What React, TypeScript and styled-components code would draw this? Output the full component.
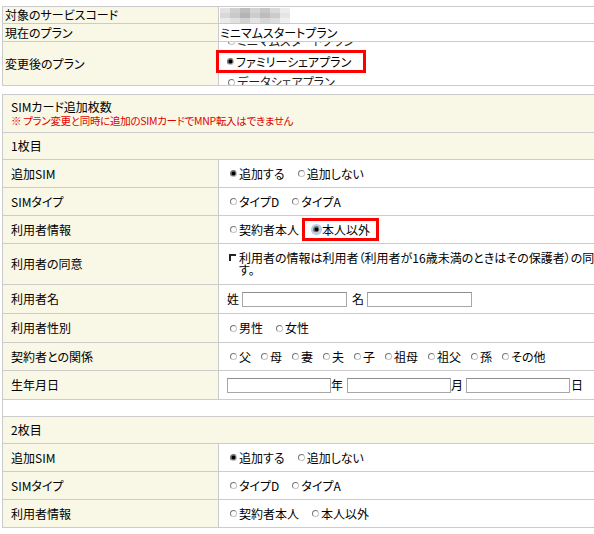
import React from 'react';
import styled, { createGlobalStyle } from 'styled-components';

const GlobalStyle = createGlobalStyle`
  html, body {
    margin: 0;
    padding: 0;
    background: #fff;
    overflow: hidden;
  }
  body {
    font-family: "Noto Sans CJK JP", "Noto Sans", sans-serif;
    font-size: 12px;
    color: #000;
    font-feature-settings: "palt";
  }
`;

const Page = styled.div`
  padding: 6px 0 0 2px;
  width: 660px;
`;

const Table = styled.table<{ $gap?: number }>`
  border-collapse: collapse;
  table-layout: fixed;
  width: 650px;
  margin-top: ${p => p.$gap ?? 0}px;
  font-size: 12px;
  line-height: 14px;
`;

const Row = styled.tr<{ $h: number }>`
  height: ${p => p.$h}px;
`;

const Label = styled.td<{ $pad: number }>`
  background: #f9f7e6;
  border: 1px solid #cbcbcb;
  padding: 0 0 0 ${p => p.$pad}px;
  vertical-align: middle;
  white-space: nowrap;
`;

const Value = styled.td<{ $pad: number }>`
  background: #fff;
  border: 1px solid #cbcbcb;
  padding: 0 0 0 ${p => p.$pad}px;
  vertical-align: middle;
  white-space: nowrap;
`;

const Wide = styled.td<{ $tint?: boolean; $pad: number }>`
  background: ${p => (p.$tint ? '#f9f7e6' : '#fff')};
  border: 1px solid #cbcbcb;
  padding: 0 0 0 ${p => p.$pad}px;
  vertical-align: middle;
`;

const Note = styled.div`
  color: #e00000;
  font-size: 10.5px;
  line-height: 13px;
  letter-spacing: -0.3px;
`;

const Mosaic = styled.div`
  display: grid;
  grid-template-columns: repeat(7, 10px);
  grid-auto-rows: 5px;
  margin-top: 1px;
`;

const Tile = styled.span<{ $c: string }>`
  background: ${p => p.$c};
`;

const Options = styled.div`
  display: flex;
  align-items: center;
`;

const Option = styled.span<{ $gap?: number }>`
  display: inline-flex;
  align-items: center;
  margin-right: ${p => p.$gap ?? 10}px;
`;

const Radio = styled.span<{ $on?: boolean; $focus?: boolean }>`
  display: inline-block;
  flex: none;
  box-sizing: border-box;
  width: 7px;
  height: 7px;
  margin: 0 2px 0 3px;
  border-radius: 50%;
  border: 1px solid #777;
  border-right-color: #c4c4c4;
  border-bottom-color: #c4c4c4;
  background: ${p => (p.$on ? 'radial-gradient(circle, #000 0 55%, #555 56%)' : '#fff')};
  box-shadow: ${p => (p.$focus ? '0 0 0 2px #b5cdea' : 'none')};
`;

const Check = styled.span`
  display: inline-block;
  flex: none;
  box-sizing: border-box;
  width: 7px;
  height: 7px;
  margin: 2px 3px 0 2px;
  border-top: 2px solid #222;
  border-left: 2px solid #222;
  align-self: flex-start;
`;

const Consent = styled.div`
  display: flex;
  line-height: 12px;
  white-space: nowrap;
`;

const Stack = styled.div`
  display: flex;
  flex-direction: column;
  height: 43px;
`;

const Clip = styled.div<{ $h: number; $bottom?: boolean }>`
  height: ${p => p.$h}px;
  overflow: hidden;
  display: flex;
  align-items: ${p => (p.$bottom ? 'flex-end' : 'flex-start')};
  padding-left: 6px;
  color: #222;
`;

const ClipLine = styled.div`
  display: flex;
  align-items: center;
  height: 18px;
  flex: none;
`;

const Marked = styled.div<{ $shift: number; $w?: number }>`
  display: inline-flex;
  align-items: center;
  box-sizing: border-box;
  height: 23px;
  ${p => (p.$w ? `width: ${p.$w}px;` : '')}
  border: 3px solid #f00;
  background: #fff;
  margin-left: ${p => p.$shift}px;
  padding: 0 6px 0 5px;
  position: relative;
  z-index: 1;
`;

const TextBox = styled.input<{ $l: number; $r: number; $w: number }>`
  box-sizing: border-box;
  width: ${p => p.$w}px;
  height: 15px;
  margin: 0 ${p => p.$r}px 0 ${p => p.$l}px;
  padding: 0;
  border: 1px solid #a7a7a7;
  border-top-color: #8e8e8e;
  background: #fff;
`;

const Field = styled.div`
  display: flex;
  align-items: center;
`;

const grays = [
  '#e2e2e2', '#cfcfcf', '#bdbdbd', '#d4d4d4', '#c6c6c6', '#d9d9d9', '#ececec',
  '#d8d8d8', '#c9c9c9', '#b4b4b4', '#cdcdcd', '#bcbcbc', '#cbcbcb', '#e5e5e5',
  '#ebebeb', '#e0e0e0', '#d2d2d2', '#e4e4e4', '#d6d6d6', '#dedede', '#f0f0f0',
];

type Opt = { label: string; on?: boolean };

function RadioSet({ items, gap }: { items: Opt[]; gap?: number }) {
  return (
    <Options>
      {items.map(o => (
        <Option key={o.label} $gap={gap}>
          <Radio $on={o.on} />
          {o.label}
        </Option>
      ))}
    </Options>
  );
}

const relations = ['父', '母', '妻', '夫', '子', '祖母', '祖父', '孫', 'その他'];

function CardRows({ first }: { first: boolean }) {
  return (
    <>
      <Row $h={28}>
        <Label $pad={8}>追加SIM</Label>
        <Value $pad={8}>
          <RadioSet items={[{ label: '追加する', on: true }, { label: '追加しない' }]} />
        </Value>
      </Row>
      <Row $h={28}>
        <Label $pad={8}>SIMタイプ</Label>
        <Value $pad={8}>
          <RadioSet items={[{ label: 'タイプD' }, { label: 'タイプA' }]} />
        </Value>
      </Row>
      <Row $h={28}>
        <Label $pad={8}>利用者情報</Label>
        <Value $pad={8}>
          {first ? (
            <Options>
              <Option $gap={0}>
                <Radio />
                契約者本人
              </Option>
              <Marked $shift={3}>
                <Radio $on $focus />
                本人以外
              </Marked>
            </Options>
          ) : (
            <RadioSet items={[{ label: '契約者本人' }, { label: '本人以外' }]} />
          )}
        </Value>
      </Row>
    </>
  );
}

export default function App() {
  return (
    <Page>
      <GlobalStyle />
      <Table>
        <colgroup>
          <col style={{ width: 216 }} />
          <col />
        </colgroup>
        <tbody>
          <Row $h={16}>
            <Label $pad={2}>対象のサービスコード</Label>
            <Value $pad={1}>
              <Mosaic>
                {grays.map((c, i) => (
                  <Tile key={i} $c={c} />
                ))}
              </Mosaic>
            </Value>
          </Row>
          <Row $h={18}>
            <Label $pad={2}>現在のプラン</Label>
            <Value $pad={1}>ミニマムスタートプラン</Value>
          </Row>
          <Row $h={43}>
            <Label $pad={2}>変更後のプラン</Label>
            <Value $pad={0}>
              <Stack>
                <Clip $h={8} $bottom>
                  <ClipLine>
                    <Radio />
                    ミニマムスタートプラン
                  </ClipLine>
                </Clip>
                <Marked $shift={-3} $w={150}>
                  <Radio $on />
                  ファミリーシェアプラン
                </Marked>
                <Clip $h={12}>
                  <ClipLine>
                    <Radio />
                    データシェアプラン
                  </ClipLine>
                </Clip>
              </Stack>
            </Value>
          </Row>
        </tbody>
      </Table>

      <Table $gap={8}>
        <colgroup>
          <col style={{ width: 216 }} />
          <col />
        </colgroup>
        <tbody>
          <Row $h={38}>
            <Wide colSpan={2} $tint $pad={8}>
              <div>SIMカード追加枚数</div>
              <Note>※ プラン変更と同時に追加のSIMカードでMNP転入はできません</Note>
            </Wide>
          </Row>
          <Row $h={27}>
            <Wide colSpan={2} $tint $pad={8}>1枚目</Wide>
          </Row>
          <CardRows first />
          <Row $h={41}>
            <Label $pad={8}>利用者の同意</Label>
            <Value $pad={8}>
              <Consent>
                <Check />
                <div>
                  利用者の情報は利用者（利用者が16歳未満のときはその保護者）の同意を得ていま
                  <br />
                  す。
                </div>
              </Consent>
            </Value>
          </Row>
          <Row $h={29}>
            <Label $pad={8}>利用者名</Label>
            <Value $pad={8}>
              <Field>
                姓<TextBox $l={3} $r={5} $w={105} />名<TextBox $l={3} $r={0} $w={105} />
              </Field>
            </Value>
          </Row>
          <Row $h={29}>
            <Label $pad={8}>利用者性別</Label>
            <Value $pad={8}>
              <RadioSet items={[{ label: '男性' }, { label: '女性' }]} />
            </Value>
          </Row>
          <Row $h={28}>
            <Label $pad={8}>契約者との関係</Label>
            <Value $pad={8}>
              <RadioSet gap={7} items={relations.map(r => ({ label: r }))} />
            </Value>
          </Row>
          <Row $h={29}>
            <Label $pad={8}>生年月日</Label>
            <Value $pad={8}>
              <Field>
                <TextBox $l={0} $r={0} $w={104} />年
                <TextBox $l={4} $r={0} $w={104} />月
                <TextBox $l={3} $r={1} $w={104} />日
              </Field>
            </Value>
          </Row>
          <Row $h={17}>
            <Wide colSpan={2} $pad={0} />
          </Row>
          <Row $h={27}>
            <Wide colSpan={2} $tint $pad={8}>2枚目</Wide>
          </Row>
          <CardRows first={false} />
        </tbody>
      </Table>
    </Page>
  );
}
